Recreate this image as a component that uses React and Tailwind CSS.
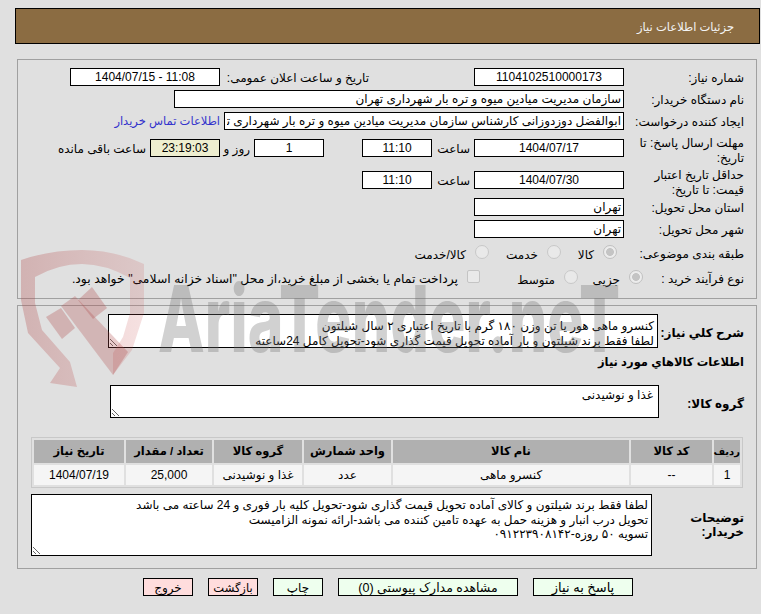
import React from "react";

const Field = ({ w, children, align = "text-center", bg = "bg-white", dir }) => (
  <div dir={dir} className={`${w} h-[18px] shrink-0 border border-black ${bg} ${align} text-[12px] leading-[16px] px-[2px] overflow-hidden whitespace-nowrap`}>{children}</div>
);
const Label = ({ children }) => (
  <div className="w-[116px] mr-[12px] ml-[4px] shrink-0 text-[12px] leading-[15px] pt-[2px]">{children}</div>
);
const Label2 = ({ children }) => (
  <div className="w-[116px] mr-[12px] ml-[4px] shrink-0 text-[12px] leading-[15px] pt-[5px]">{children}</div>
);
const radio = "appearance-none w-[14px] h-[14px] m-0 mb-[3px] shrink-0 rounded-full border border-[#c8c8c8] bg-[#e9e9e9]";
const radioOn = "appearance-none w-[14px] h-[14px] m-0 mb-[3px] shrink-0 rounded-full border border-[#c0c0c0] bg-[radial-gradient(circle,#c4c4c4_0%,#c4c4c4_42%,#ececec_50%)]";
const Btn = ({ w, bg, size = "text-[12px]", children }) => (
  <div className={`${w} h-[18px] border border-black ${bg} ${size} leading-[18px] text-center whitespace-nowrap`}>{children}</div>
);
const th = "bg-[#b0b0b0] font-bold text-[11.5px] h-[23px] p-0 text-center whitespace-nowrap";
const td = "bg-[#f5f5f5] text-[12px] h-[20px] p-0 text-center";

const Watermark = () => (
  <svg className="absolute left-0 top-0 pointer-events-none [direction:ltr]" width="761" height="614" viewBox="0 0 761 614">
    <defs>
      <linearGradient id="sh" x1="21" y1="0" x2="144" y2="0" gradientUnits="userSpaceOnUse">
        <stop offset="0" stopColor="#b04848" stopOpacity="0.3" />
        <stop offset="1" stopColor="#c85050" stopOpacity="0.17" />
      </linearGradient>
    </defs>
    <path fillRule="evenodd" fill="url(#sh)" d="M21 260 Q50 250 82 250 Q115 250 144 264 L144 313 L132 350 L113 375 L113 353 L123 337 L130 313 L130 278 Q105 264 82 264 Q58 264 35 277 L35 303 L42 330 L70 362 L77 387 L50 383 L60 368 L28 333 L21 300 Z" />
    <path d="M46 317 L61 308 L75 328 L62 339 Z" fill="#b04848" fillOpacity="0.3" />
    <path d="M61 306 L75 296 L128 352 L113 375 Z" fill="#b04848" fillOpacity="0.28" />
    <path d="M78 300 L92 287 L107 308 L93 319 Z" fill="#b04848" fillOpacity="0.3" />
    <text x="158" y="352" direction="ltr" fontFamily="Inter, 'Liberation Sans', sans-serif" fontWeight="800" fontSize="92" textLength="462" lengthAdjust="spacingAndGlyphs" fill="#707070" fillOpacity="0.32">AriaTender.neT</text>
  </svg>
);

export default function App() {
  return (
    <div dir="rtl" className="relative w-[761px] h-[614px] overflow-hidden bg-[#e0e0e0] text-black font-['Liberation_Sans','DejaVu_Sans',sans-serif] pt-[8px]">
      <div className="ml-[15px] mr-[1px] h-[36px] border border-black bg-[#8b6c42] text-[#f4f4f4] text-[11.5px] leading-[37px] pr-[25px]">جزئیات اطلاعات نیاز</div>

      <div className="ml-[17px] mr-[4px] mt-[15px] h-[240px] border border-[#a0a0a0] pt-[8px]">
        <div className="flex items-center h-[18px]">
          <Label>شماره نیاز:</Label>
          <Field w="w-[150px]">1104102510000173</Field>
          <div className="w-[254px] shrink-0 pr-[105px] pt-[2px] text-[12px] whitespace-nowrap">تاریخ و ساعت اعلان عمومی:</div>
          <Field w="w-[150px]" dir="ltr">1404/07/15 - 11:08</Field>
        </div>
        <div className="flex items-center h-[18px] mt-[4px]">
          <Label>نام دستگاه خریدار:</Label>
          <Field w="w-[450px]" align="text-right">سازمان مدیریت میادین میوه و تره بار شهرداری تهران</Field>
        </div>
        <div className="flex items-center h-[18px] mt-[4px]">
          <Label>ایجاد کننده درخواست:</Label>
          <input readOnly dir="rtl" value="ابوالفضل دوزدوزانی کارشناس سازمان مدیریت میادین میوه و تره بار شهرداری تهران" className="w-[400px] h-[18px] shrink-0 border border-black bg-white text-[12px] px-[2px]" />
          <div className="mr-[4px] pt-[2px] text-[11.5px] text-[#3333cc] whitespace-nowrap">اطلاعات تماس خریدار</div>
        </div>
        <div className="flex items-center h-[18px] mt-[9px]">
          <Label2>مهلت ارسال پاسخ: تا تاریخ:</Label2>
          <Field w="w-[150px]">1404/07/17</Field>
          <div className="w-[42px] shrink-0 pr-[4px] pt-[2px] text-[12px]">ساعت</div>
          <Field w="w-[70px]">11:10</Field>
          <div className="w-[38px] shrink-0"></div>
          <Field w="w-[70px]">1</Field>
          <div className="w-[34px] shrink-0 pr-[4px] pt-[2px] text-[12px]">روز و</div>
          <Field w="w-[70px]" bg="bg-[#eeeed0]">23:19:03</Field>
          <div className="pr-[4px] pt-[2px] text-[12px] whitespace-nowrap">ساعت باقی مانده</div>
        </div>
        <div className="flex items-center h-[18px] mt-[14px]">
          <Label2>حداقل تاریخ اعتبار قیمت: تا تاریخ:</Label2>
          <Field w="w-[150px]">1404/07/30</Field>
          <div className="w-[42px] shrink-0 pr-[4px] pt-[2px] text-[12px]">ساعت</div>
          <Field w="w-[70px]">11:10</Field>
        </div>
        <div className="flex items-center h-[18px] mt-[9px]">
          <Label>استان محل تحویل:</Label>
          <Field w="w-[150px]" align="text-right">تهران</Field>
        </div>
        <div className="flex items-center h-[18px] mt-[4px]">
          <Label>شهر محل تحویل:</Label>
          <Field w="w-[150px]" align="text-right">تهران</Field>
        </div>
        <div className="flex items-center h-[18px] mt-[6px] text-[12px]">
          <Label>طبقه بندی موضوعی:</Label>
          <div className="flex items-center w-[63px] shrink-0 gap-[9px] pr-[7px]"><input type="radio" disabled checked readOnly className={radioOn} /><span className="pt-[3px]">کالا</span></div>
          <div className="flex items-center w-[72px] shrink-0 gap-[9px]"><input type="radio" disabled className={radio} /><span className="pt-[3px]">خدمت</span></div>
          <div className="flex items-center gap-[9px]"><input type="radio" disabled className={radio} /><span className="pt-[3px]">کالا/خدمت</span></div>
        </div>
        <div className="flex items-center h-[18px] mt-[7px] text-[12px]">
          <Label>نوع فرآیند خرید :</Label>
          <div className="flex items-center w-[65px] shrink-0 gap-[9px] mr-[-19px]"><input type="radio" disabled checked readOnly className={radioOn} /><span className="pt-[3px]">جزیی</span></div>
          <div className="flex items-center w-[98px] shrink-0 gap-[9px]"><input type="radio" disabled className={radio} /><span className="pt-[3px]">متوسط</span></div>
          <div className="flex items-center gap-[9px] whitespace-nowrap"><input type="checkbox" disabled className="appearance-none w-[13px] h-[13px] m-0 mb-[3px] shrink-0 rounded-[2px] border border-[#c4c4c4] bg-[#e9e9e9]" /><span className="pt-[3px] text-[12.4px]">پرداخت تمام یا بخشی از مبلغ خرید،از محل "اسناد خزانه اسلامی" خواهد بود.</span></div>
        </div>
      </div>

      <div className="ml-[17px] mr-[4px] mt-[6px] h-[264px] border border-[#a0a0a0] pt-[8px]">
        <div className="flex items-center h-[34px]">
          <div className="w-[85px] mr-[12px] ml-[1px] pt-[3px] shrink-0 text-[12px] font-bold whitespace-nowrap">شرح کلي نیاز:</div>
          <textarea readOnly dir="rtl" className="w-[550px] h-[34px] border border-black bg-white text-[12px] leading-[15px] px-[3px] pt-[4px] overflow-hidden shrink-0" defaultValue={"کنسرو ماهی هور یا تن وزن ۱۸۰ گرم با تاریخ اعتباری ۲ سال شیلتون\nلطفا فقط برند شیلتون و بار آماده تحویل قیمت گذاری شود-تحویل کامل 24ساعته"} />
        </div>
        <div className="mt-[6px] mr-[12px] h-[16px] text-[11.5px] leading-[16px] font-bold">اطلاعات کالاهاي مورد نیاز</div>
        <div className="flex items-start h-[33px] mt-[15px]">
          <div className="w-[85px] mr-[12px] pt-[10px] shrink-0 text-[12px] font-bold">گروه کالا:</div>
          <textarea readOnly dir="rtl" className="w-[549px] h-[33px] border border-black bg-white text-[12px] leading-[15px] px-[5px] py-[2px] overflow-hidden shrink-0" defaultValue="غذا و نوشیدنی" />
        </div>
        <table className="mt-[19px] mr-[13px] w-[712px] border border-[#c8c8c8] border-separate border-spacing-[2px] table-fixed">
          <thead>
            <tr>
              <th className={`${th} w-[26px] !text-[10px]`}>ردیف</th>
              <th className={`${th} w-[81px]`}>کد کالا</th>
              <th className={`${th} w-[236px]`}>نام کالا</th>
              <th className={`${th} w-[87px]`}>واحد شمارش</th>
              <th className={`${th} w-[88px]`}>گروه کالا</th>
              <th className={`${th} w-[86px]`}>تعداد / مقدار</th>
              <th className={th}>تاریخ نیاز</th>
            </tr>
          </thead>
          <tbody>
            <tr>
              <td className={td}>1</td>
              <td className={td}>--</td>
              <td className={td}>کنسرو ماهی</td>
              <td className={td}>عدد</td>
              <td className={td}>غذا و نوشیدنی</td>
              <td className={td}>25,000</td>
              <td className={td}>1404/07/19</td>
            </tr>
          </tbody>
        </table>
        <div className="flex items-center h-[62px] mt-[6px]">
          <div className="w-[92px] mr-[12px] pl-[40px] shrink-0 text-[12px] leading-[14px] font-bold">توضیحات خریدار:</div>
          <textarea readOnly dir="rtl" className="w-[621px] h-[62px] border border-black bg-white text-[12px] leading-[14.5px] px-[3px] py-[3px] overflow-hidden shrink-0" defaultValue={"لطفا فقط برند شیلتون و کالای آماده تحویل قیمت گذاری شود-تحویل کلیه بار فوری و 24 ساعته می باشد\nتحویل درب انبار و هزینه حمل به عهده تامین کننده می باشد-ارائه نمونه الزامیست\nتسویه ۵۰ روزه-۰۹۱۲۲۳۹۰۸۱۴۲"} />
        </div>
      </div>

      <div className="flex mt-[9px] mr-[128px] gap-[15px]">
        <Btn w="w-[100px]" bg="bg-[#eeffee]" size="text-[13px]">پاسخ به نیاز</Btn>
        <Btn w="w-[180px]" bg="bg-[#eeffee]" size="text-[12.5px]">مشاهده مدارک پیوستی (0)</Btn>
        <Btn w="w-[50px]" bg="bg-[#eeffee]">چاپ</Btn>
        <Btn w="w-[50px]" bg="bg-[#ffdddd]" size="text-[11.5px]">بازگشت</Btn>
        <Btn w="w-[50px]" bg="bg-[#ffdddd]">خروج</Btn>
      </div>
      <Watermark />
    </div>
  );
}
